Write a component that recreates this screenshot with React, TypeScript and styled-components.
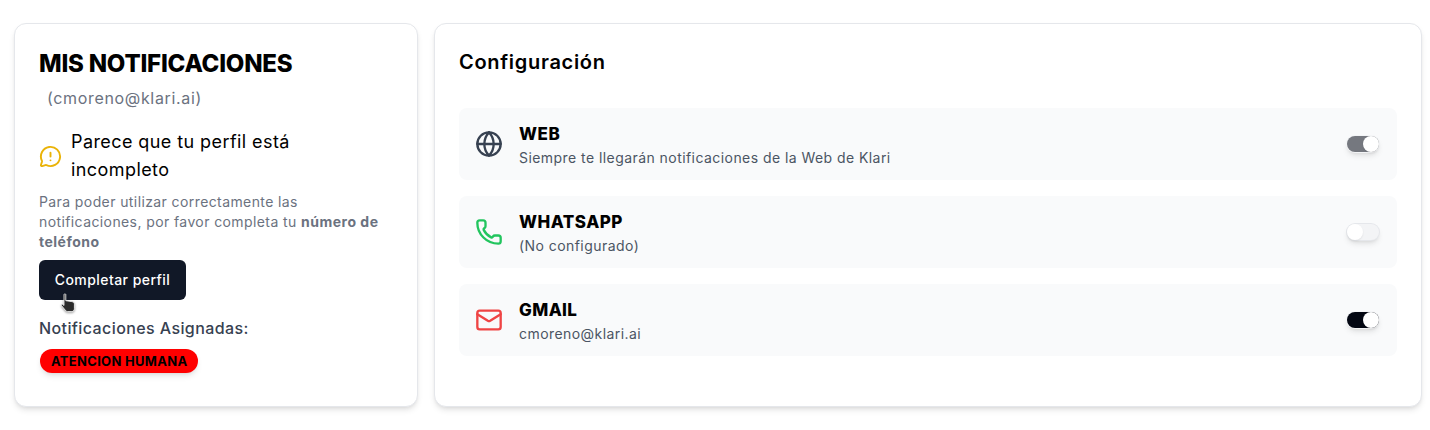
import React from "react";
import styled, { createGlobalStyle } from "styled-components";
import { Globe, Mail, MessageCircleWarning, Phone } from "lucide-react";

const Global = createGlobalStyle`
  html, body { margin: 0; padding: 0; background: #fff; }
  body { font-family: Inter, "Liberation Sans", sans-serif; }
`;

const Page = styled.div`
  display: grid;
  grid-template-columns: 404px 988px;
  gap: 16px;
  padding: 23px 0 0 14px;
  width: 1430px;
  height: 430px;
  box-sizing: border-box;
  overflow: hidden;
`;

const Card = styled.section`
  position: relative;
  height: 384px;
  box-sizing: border-box;
  padding: 24px;
  background: #fff;
  border: 1px solid #e5e7eb;
  border-radius: 12px;
  box-shadow: 0 4px 6px -1px rgba(0, 0, 0, 0.1), 0 2px 4px -2px rgba(0, 0, 0, 0.1);
`;

const Title = styled.h1`
  margin: 0;
  font-size: 24px;
  line-height: 32px;
  font-weight: 800;
  color: #000;
  letter-spacing: -0.22px;
`;

const Email = styled.p`
  margin: 6px 0 0 8px;
  font-size: 16px;
  line-height: 24px;
  color: #6b7280;
  letter-spacing: 0.66px;
`;

const Warning = styled.div`
  display: flex;
  align-items: center;
  gap: 9px;
  margin-top: 18px;
  width: 290px;
  font-size: 18px;
  line-height: 28px;
  color: #000;
  letter-spacing: 0.42px;
`;

const WarnIcon = styled(MessageCircleWarning)`
  flex: none;
  color: #eab308;
`;

const Help = styled.p`
  margin: 8px 0 0;
  font-size: 14px;
  line-height: 20px;
  letter-spacing: 0.4px;
  color: #6b7280;
  b { font-weight: 700; letter-spacing: 0.5px; }
`;

const ButtonWrap = styled.div`
  position: relative;
  margin-top: 8px;
  width: fit-content;
`;

const PrimaryButton = styled.button`
  display: block;
  width: 147px;
  height: 40px;
  border: 0;
  border-radius: 6px;
  background: #111827;
  color: #fff;
  font: 500 14px/20px Inter, sans-serif;
  letter-spacing: 0.45px;
  padding: 0;
`;

const Cursor = styled.svg`
  position: absolute;
  left: 21px;
  top: 33px;
  width: 19px;
  height: 20px;
  filter: drop-shadow(0 1px 1px rgba(0, 0, 0, 0.4));
`;

const Assigned = styled.h2`
  margin: 16px 0 0;
  font-size: 16px;
  line-height: 24px;
  font-weight: 500;
  letter-spacing: 0.4px;
  color: #374151;
`;

const Badge = styled.span`
  display: inline-block;
  margin: 9px 0 0 1px;
  padding: 0 11px;
  height: 24px;
  line-height: 24px;
  border-radius: 12px;
  background: #ff0000;
  color: #000;
  font-size: 13px;
  font-weight: 700;
  letter-spacing: 0.3px;
  box-shadow: 0 4px 6px -1px rgba(0, 0, 0, 0.1), 0 2px 4px -2px rgba(0, 0, 0, 0.1);
`;

const Heading = styled.h2`
  margin: 0 0 32px;
  font-size: 20px;
  line-height: 28px;
  font-weight: 600;
  letter-spacing: 0.7px;
  color: #000;
`;

const Rows = styled.div`
  display: flex;
  flex-direction: column;
  gap: 16px;
`;

const Row = styled.div`
  display: flex;
  align-items: center;
  gap: 16px;
  height: 72px;
  padding: 0 16px;
  border-radius: 8px;
  background: #f9fafb;
`;

const RowText = styled.div`
  flex: 1;
  padding-top: 2px;
`;

const RowTitle = styled.div<{ $tracking: number }>`
  font-size: 17px;
  line-height: 24px;
  font-weight: 800;
  color: #000;
  letter-spacing: ${(p) => p.$tracking}px;
`;

const RowSub = styled.div`
  margin-top: 2px;
  font-size: 14px;
  line-height: 20px;
  letter-spacing: 0.44px;
  color: #4b5563;
`;

const Toggle = styled.span<{ $state: "muted" | "off" | "on" }>`
  position: relative;
  display: block;
  flex: none;
  width: 32px;
  height: 16px;
  margin-right: 2px;
  border-radius: 9px;
  background: ${(p) => (p.$state === "muted" ? "#75787f" : p.$state === "on" ? "#030712" : "#f3f4f6")};
  box-shadow: 0 0 0 1px ${(p) => (p.$state === "off" ? "#e5e7eb" : "#f3f4f6")}, 0 4px 6px -1px rgba(0, 0, 0, 0.12), 0 2px 4px -2px rgba(0, 0, 0, 0.12);
  &::after {
    content: "";
    position: absolute;
    top: 0;
    left: ${(p) => (p.$state === "off" ? "0" : "16px")};
    width: 16px;
    height: 16px;
    border-radius: 50%;
    background: #fff;
    box-shadow: 0 1px 2px rgba(0, 0, 0, 0.08);
  }
`;

export default function App() {
  return (
    <>
      <Global />
      <Page>
        <Card>
          <Title>MIS NOTIFICACIONES</Title>
          <Email>(cmoreno@klari.ai)</Email>
          <Warning>
            <WarnIcon size={23} strokeWidth={2} />
            <span>Parece que tu perfil está incompleto</span>
          </Warning>
          <Help>
            Para poder utilizar correctamente las notificaciones, por favor completa tu <b>número de teléfono</b>
          </Help>
          <ButtonWrap>
            <PrimaryButton>Completar perfil</PrimaryButton>
            <Cursor viewBox="0 0 19 20" aria-hidden="true">
              <path
                d="M4 1.5c0-.8 1.8-.8 1.8 0v6.2l6 .9c1.5.3 2.6 1 2.6 2.5v4.5c0 1.5-1 3-2.5 3H7.5c-1 0-1.6-.6-2.2-1.4L1.5 12.6c-.6-1 .6-1.8 1.5-1L4 12.5z"
                fill="#2b2b2b"
                stroke="#fff"
                strokeWidth="0.8"
              />
            </Cursor>
          </ButtonWrap>
          <Assigned>Notificaciones Asignadas:</Assigned>
          <Badge>ATENCION HUMANA</Badge>
        </Card>
        <Card>
          <Heading>Configuración</Heading>
          <Rows>
            <Row>
              <Globe size={28} color="#374151" strokeWidth={2} />
              <RowText>
                <RowTitle $tracking={0.6}>WEB</RowTitle>
                <RowSub>Siempre te llegarán notificaciones de la Web de Klari</RowSub>
              </RowText>
              <Toggle $state="muted" />
            </Row>
            <Row>
              <Phone size={28} color="#22c55e" strokeWidth={2} />
              <RowText>
                <RowTitle $tracking={0.5}>WHATSAPP</RowTitle>
                <RowSub>(No configurado)</RowSub>
              </RowText>
              <Toggle $state="off" />
            </Row>
            <Row>
              <Mail size={28} color="#ef4444" strokeWidth={2} />
              <RowText>
                <RowTitle $tracking={0.4}>GMAIL</RowTitle>
                <RowSub>cmoreno@klari.ai</RowSub>
              </RowText>
              <Toggle $state="on" />
            </Row>
          </Rows>
        </Card>
      </Page>
    </>
  );
}
